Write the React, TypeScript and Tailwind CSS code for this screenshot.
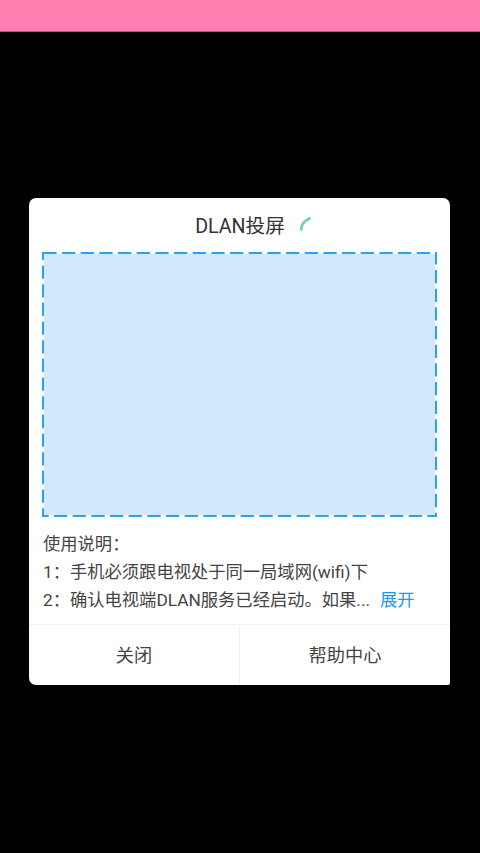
export default function App() {
  return (
    <div className="flex h-[853px] w-[480px] flex-col overflow-hidden bg-black font-['Roboto','Noto_Sans_CJK_SC',sans-serif]">
      <div className="h-[31px] shrink-0 bg-[#ff7fb0]" />
      <div className="h-px shrink-0 bg-[#5a78c8]" />

      <div className="flex flex-1 items-start pl-[29px] pt-[166px]">
        <div className="w-[421px] overflow-hidden rounded-[7px] rounded-br-[2px] bg-white">
          <div className="flex h-[54px] items-center justify-center pl-[29px]">
            <span className="pt-[3px] text-[19.6px] leading-none text-[#333333]">DLAN投屏</span>
            <svg className="mb-[2px] ml-[14px] h-[18px] w-[14px]" viewBox="0 0 14 18" fill="none">
              <path d="M2.3 14.5C2 10.5 4.5 6.5 10.5 3.5" stroke="#74cfc8" strokeWidth="2.8" strokeLinecap="round" />
            </svg>
          </div>

          <div className="relative mx-[13px] h-[265px] border-2 border-transparent bg-[#d2e8fd] bg-clip-padding">
            <svg className="absolute -inset-[2px] h-[265px] w-[395px]" viewBox="0 0 395 265" fill="none" stroke="#2f9ff0" strokeWidth="2">
              <line x1="0" y1="1" x2="395" y2="1" strokeDasharray="13.3 5.37" strokeDashoffset="-1.3" />
              <line x1="1" y1="0" x2="1" y2="265" strokeDasharray="13.3 5.37" strokeDashoffset="5.2" />
              <line x1="0" y1="264" x2="395" y2="264" strokeDasharray="13.3 5.37" strokeDashoffset="6.7" />
              <line x1="394" y1="0" x2="394" y2="265" strokeDasharray="13.3 5.37" strokeDashoffset="0.7" />
            </svg>
          </div>

          <div className="px-[14px] pt-[13px] text-[17.3px] leading-[28px] text-[#444444]">
            <p>使用说明：</p>
            <p>1：手机必须跟电视处于同一局域网(wifi)下</p>
            <p>
              2：确认电视端DLAN服务已经启动。如果...
              <span className="ml-[10px] text-[#2196f3]">展开</span>
            </p>
          </div>

          <div className="mt-[10px] flex h-[61px] border-t border-[#f0f0f0] pt-px text-[18.2px] text-[#444444]">
            <button className="flex flex-1 items-center justify-center border-r border-[#f0f0f0]">关闭</button>
            <button className="flex w-[210px] items-center justify-center">帮助中心</button>
          </div>
        </div>
      </div>
    </div>
  )
}
